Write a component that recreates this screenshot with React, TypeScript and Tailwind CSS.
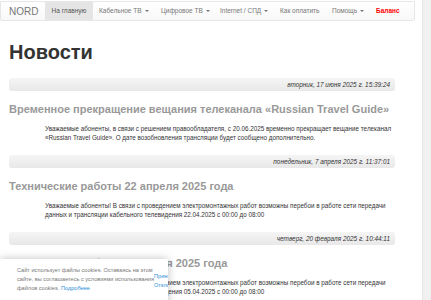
const menu = [
  { label: 'Кабельное ТВ', drop: true, w: 'w-[62px]' },
  { label: 'Цифровое ТВ', drop: true, w: 'w-[59px]' },
  { label: 'Internet / СПД', drop: true, w: 'w-[60px]' },
  { label: 'Как оплатить', drop: false, w: 'w-[52px]' },
  { label: 'Помощь', drop: true, w: 'w-[44px]' },
]

const news = [
  {
    date: 'вторник, 17 июня 2025 г. 15:39:24',
    title: 'Временное прекращение вещания телеканала «Russian Travel Guide»',
    text: 'Уважаемые абоненты, в связи с решением правообладателя, с 20.06.2025 временно прекращает вещание телеканал «Russian Travel Guide». О дате возобновления трансляции будет сообщено дополнительно.',
  },
  {
    date: 'понедельник, 7 апреля 2025 г. 11:37:01',
    title: 'Технические работы 22 апреля 2025 года',
    text: 'Уважаемые абоненты! В связи с проведением электромонтажных работ возможны перебои в работе сети передачи данных и трансляции кабельного телевидения 22.04.2025 с 00:00 до 08:00',
  },
  {
    date: 'четверг, 20 февраля 2025 г. 10:44:11',
    title: 'Технические работы 5 апреля 2025 года',
    text: 'Уважаемые абоненты! В связи с проведением электромонтажных работ возможны перебои в работе сети передачи данных и трансляции кабельного телевидения 05.04.2025 с 00:00 до 08:00',
  },
]

function Caret() {
  return <span className="ml-[3px] inline-block border-x-[2px] border-t-[2px] border-x-transparent border-t-[#777] align-middle" />
}

export default function App() {
  return (
    <div className="relative flex h-[300px] w-[431px] overflow-hidden bg-white font-['Liberation_Sans',Arial,sans-serif] text-[#333]">
      <div className="flex-1 min-w-0">
        {/* навбар */}
        <div className="mr-[7px] mt-[1px] flex h-[20px] items-stretch whitespace-nowrap rounded-b-[2px] border border-[#e7e7e7] bg-gradient-to-b from-white to-[#f8f8f8]">
          <div className="flex w-[44px] items-center pl-[8px] text-[10px] text-[#777]">NORD</div>
          <div className="flex w-[48px] items-center justify-center bg-[#e5e5e5] text-[6.5px] text-[#555]">На главную</div>
          {menu.map((m) => (
            <div key={m.label} className={`flex items-center pl-[6px] text-[6.5px] text-[#777] ${m.w}`}>
              {m.label}
              {m.drop && <Caret />}
            </div>
          ))}
          <div className="flex items-center pl-[6px] text-[6.5px] font-bold text-[#f00]">Баланс</div>
        </div>

        <div className="w-[395px] pl-[9px]">
          <h1 className="mt-[20px] text-[20px] font-bold leading-[22px] text-[#333]">Новости</h1>

          <div className="mt-[15px]">
            {news.map((n) => (
              <div key={n.date} className="mb-[13px]">
                <div className="flex h-[13px] items-center justify-end rounded-[3px] bg-gradient-to-b from-[#f5f5f5] to-[#e8e8e8] px-[5px] text-[6.4px] italic text-[#333]">
                  {n.date}
                </div>
                <h2 className="mt-[9px] whitespace-nowrap text-[11px] font-bold leading-[18px] text-[#999]">{n.title}</h2>
                <p className="mt-[6px] ml-[36px] text-[6.3px] leading-[9px] text-[#333]">{n.text}</p>
              </div>
            ))}
          </div>
        </div>
      </div>

      {/* полоса прокрутки */}
      <div className="w-[9px] border-l border-[#e5e5e5] bg-[#f1f1f1]" />

      {/* cookies */}
      <div className="absolute left-0 top-[259px] flex h-[60px] w-[168px] items-start overflow-hidden bg-white pl-[17px] pt-[7px] shadow-[0_0_8px_rgba(0,0,0,0.25)]">
        <p className="w-[137px] shrink-0 text-[5.6px] leading-[9px] text-[#777]">
          Сайт использует файлы cookies. Оставаясь на этом сайте, вы соглашаетесь с условиями использования файлов cookies.{' '}
          <span className="text-[#2a8fd6]">Подробнее</span>
        </p>
        <div className="shrink-0 pt-[6px] text-[5.6px] leading-[9px] text-[#2a8fd6]">
          <div>Принять</div>
          <div>Отклонить</div>
        </div>
      </div>
    </div>
  )
}
